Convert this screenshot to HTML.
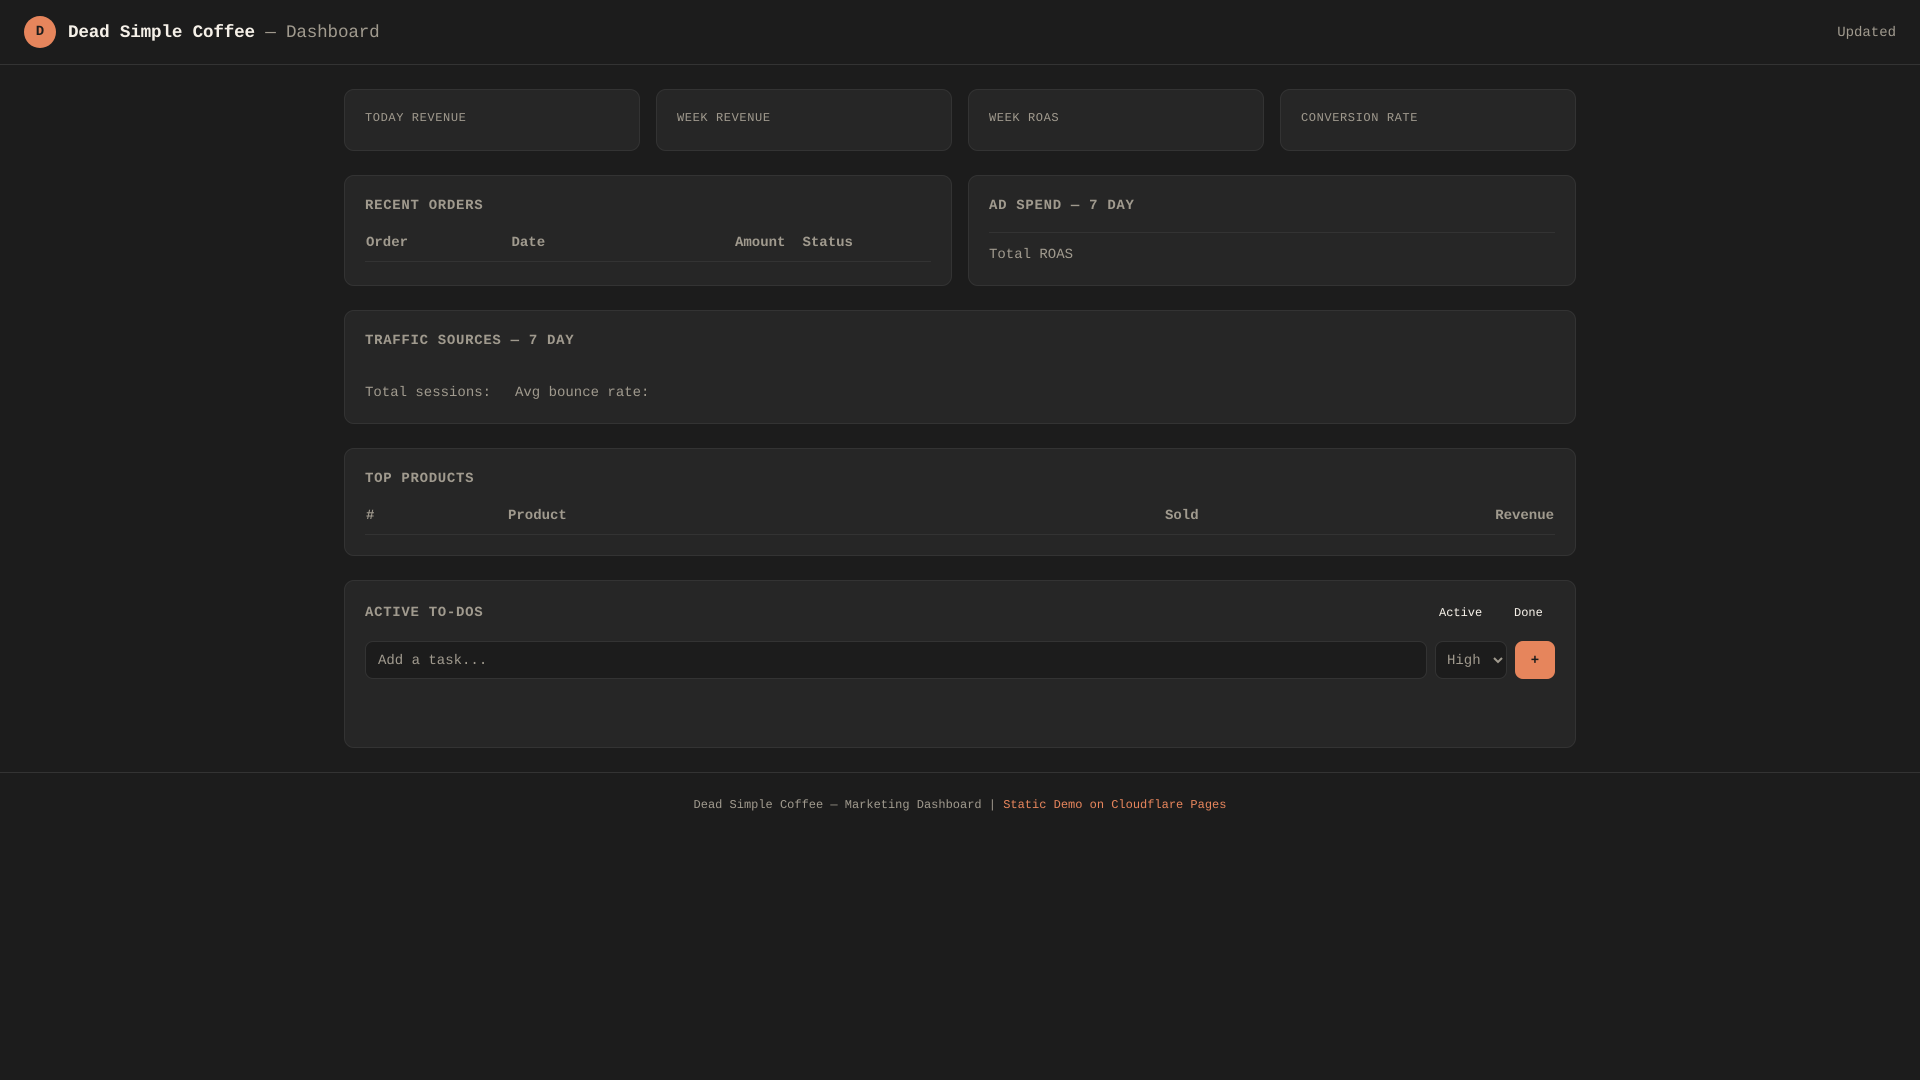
<!DOCTYPE html>
<html lang="en">
<head>
<meta charset="utf-8">
<title>Dead Simple Coffee — Dashboard</title>
<style>
*{box-sizing:border-box;margin:0;padding:0;text-rendering:geometricPrecision}
html,body{width:1920px;height:1080px;overflow:hidden;background:#1c1c1c}
body{position:relative;font-family:"Courier New","Liberation Mono",monospace;font-size:14px;color:#a09a8e}
header{position:absolute;left:0;top:0;width:1920px;height:65px;border-bottom:1px solid #333}
.logo{position:absolute;left:24px;top:16px;width:32px;height:32px;border-radius:50%;background:#e6855c;color:#1c1c1c;font-weight:700;font-size:14px;line-height:32px;text-align:center}
.brand{position:absolute;left:68px;top:22px;line-height:22px;font-size:17.6px;letter-spacing:-.176px;font-weight:700;color:#f5f0e8;white-space:pre}
.brand span{font-weight:400;color:#a09a8e}
.updated{position:absolute;right:24px;top:25px;line-height:16px;font-size:14px;color:#a09a8e}
.card{position:absolute;background:#262626;border:1px solid #333;border-radius:10px}
.t{position:absolute;white-space:pre;line-height:16px}
.label{left:20px;top:21px;font-size:12px;letter-spacing:.6px;line-height:14px;color:#a09a8e}
.title{left:20px;top:22px;font-size:14px;font-weight:700;letter-spacing:.7px;color:#a09a8e}
.th{font-weight:700;font-size:14px;color:#a09a8e}
.rule{position:absolute;height:1px;background:#333}
.input{position:absolute;left:20px;top:60px;width:1062px;height:38px;background:#1c1c1c;border:1px solid #333;border-radius:8px;color:#a09a8e;font:14px "Courier New","Liberation Mono",monospace;padding:1px 12px 0;outline:none}
.input::placeholder{color:#a09a8e;opacity:1}
select{position:absolute;left:1090px;top:60px;width:72px;height:38px;background:#1c1c1c;border:1px solid #333;border-radius:8px;color:#a09a8e;font:14px "Courier New","Liberation Mono",monospace;padding:1px 7px 0;outline:none}
.add{position:absolute;left:1170px;top:60px;width:40px;height:38px;background:#e6855c;border:none;border-radius:8px;color:#1c1c1c;font:700 14px "Courier New","Liberation Mono",monospace;padding-top:1px}
.tab{font-size:12px;color:#f5f0e8}
footer{position:absolute;left:0;top:772px;width:1920px;border-top:1px solid #333;text-align:center;font-size:12px;line-height:14px;padding-top:25px;color:#a09a8e}
footer a{color:#e6855c;text-decoration:none}
</style>
</head>
<body>
<header>
  <div class="logo">D</div>
  <div class="brand">Dead Simple Coffee <span>— Dashboard</span></div>
  <div class="updated">Updated</div>
</header>

<div class="card" style="left:344px;top:89px;width:296px;height:62px"><div class="t label">TODAY REVENUE</div></div>
<div class="card" style="left:656px;top:89px;width:296px;height:62px"><div class="t label">WEEK REVENUE</div></div>
<div class="card" style="left:968px;top:89px;width:296px;height:62px"><div class="t label">WEEK ROAS</div></div>
<div class="card" style="left:1280px;top:89px;width:296px;height:62px"><div class="t label">CONVERSION RATE</div></div>

<div class="card" style="left:344px;top:175px;width:608px;height:111px">
  <div class="t title">RECENT ORDERS</div>
  <div class="t th" style="left:21px;top:59px">Order</div>
  <div class="t th" style="left:166.5px;top:59px">Date</div>
  <div class="t th" style="left:390px;top:59px">Amount</div>
  <div class="t th" style="left:457.5px;top:59px">Status</div>
  <div class="rule" style="left:20px;top:85px;width:566px"></div>
</div>

<div class="card" style="left:968px;top:175px;width:608px;height:111px">
  <div class="t title">AD SPEND — 7 DAY</div>
  <div class="rule" style="left:20px;top:56px;width:566px"></div>
  <div class="t" style="left:20px;top:71px">Total ROAS</div>
</div>

<div class="card" style="left:344px;top:310px;width:1232px;height:114px">
  <div class="t title">TRAFFIC SOURCES — 7 DAY</div>
  <div class="t" style="left:20px;top:74px">Total sessions:</div>
  <div class="t" style="left:170px;top:74px">Avg bounce rate:</div>
</div>

<div class="card" style="left:344px;top:448px;width:1232px;height:108px">
  <div class="t title">TOP PRODUCTS</div>
  <div class="t th" style="left:21px;top:59px">#</div>
  <div class="t th" style="left:163px;top:59px">Product</div>
  <div class="t th" style="left:820px;top:59px">Sold</div>
  <div class="t th" style="right:21px;top:59px">Revenue</div>
  <div class="rule" style="left:20px;top:85px;width:1190px"></div>
</div>

<div class="card" style="left:344px;top:580px;width:1232px;height:168px">
  <div class="t title" style="top:24px">ACTIVE TO-DOS</div>
  <div class="t tab" style="left:1094px;top:24px">Active</div>
  <div class="t tab" style="left:1169px;top:24px">Done</div>
  <input class="input" placeholder="Add a task...">
  <select><option>High</option></select>
  <button class="add">+</button>
</div>

<footer>Dead Simple Coffee — Marketing Dashboard | <a>Static Demo on Cloudflare Pages</a></footer>
</body>
</html>
